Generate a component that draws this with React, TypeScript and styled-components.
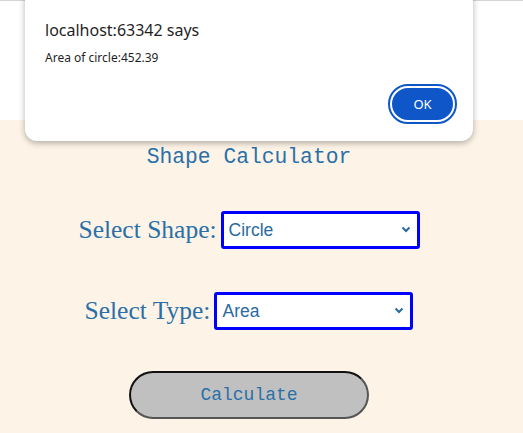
import React from 'react'
import styled, { createGlobalStyle } from 'styled-components'

const GlobalStyle = createGlobalStyle`
  html, body {
    margin: 0;
    padding: 0;
    background: #fff;
  }
`

const Page = styled.div`
  position: relative;
  width: 523px;
  height: 433px;
  overflow: hidden;
`

const TopBand = styled.div`
  height: 119px;
  border-top: 1px solid #d4d4d4;
  background: #fff;
`

const Main = styled.main`
  background: #fdf3e6;
  height: 313px;
  padding: 25px 25px 0 0;
  box-sizing: border-box;
  display: flex;
  flex-direction: column;
  align-items: center;
`

const Title = styled.h1`
  margin: 0;
  font-family: 'Liberation Mono', monospace;
  font-weight: normal;
  font-size: 21.3px;
  line-height: 25px;
  color: #2a70a8;
`

const Row = styled.div<{ $top: number }>`
  display: flex;
  align-items: center;
  gap: 4px;
  margin-top: ${p => p.$top}px;
`

const Label = styled.label`
  font-family: 'Liberation Serif', serif;
  font-size: 25.5px;
  color: #2a70a8;
`

const SelectBox = styled.div`
  position: relative;
  width: 199px;
  height: 38px;
`

const Select = styled.select`
  appearance: none;
  width: 100%;
  height: 100%;
  box-sizing: border-box;
  border: 3px solid #0000ff;
  border-radius: 3px;
  background: #fff;
  padding: 0 0 0 5px;
  font-family: 'Liberation Sans', Arial, sans-serif;
  font-size: 17.5px;
  color: #2a6aa0;
  outline: none;
`

const Chevron = styled.svg`
  position: absolute;
  right: 9px;
  top: 15px;
  pointer-events: none;
`

const CalcButton = styled.button`
  margin-top: 41px;
  width: 240px;
  height: 48px;
  border-radius: 24px;
  border: 2px solid;
  border-color: #111 #555 #555 #111;
  background: #c0c0c0;
  font-family: 'Liberation Mono', monospace;
  font-size: 18px;
  color: #2a70a8;
`

const Dialog = styled.div`
  position: absolute;
  left: 25px;
  top: -12px;
  width: 448px;
  height: 153px;
  background: #fff;
  border-radius: 12px;
  box-shadow: 0 2px 6px rgba(0, 0, 0, 0.3);
  box-sizing: border-box;
  padding: 31px 18px 0 20px;
  font-family: 'Noto Sans', 'Open Sans', sans-serif;
  color: #1f1f1f;
  display: flex;
  flex-direction: column;
`

const DialogTitle = styled.div`
  font-size: 16px;
  line-height: 22px;
`

const DialogMessage = styled.div`
  margin-top: 8px;
  font-size: 12px;
  line-height: 18px;
`

const DialogActions = styled.div`
  display: flex;
  justify-content: flex-end;
  margin-top: 19px;
`

const OkButton = styled.button`
  width: 65px;
  height: 36px;
  border-radius: 18px;
  border: 2px solid #fff;
  outline: 2px solid #0f57c8;
  background: #0f57c8;
  color: #fff;
  font-family: 'Noto Sans', 'Open Sans', sans-serif;
  font-size: 13px;
`

const ChevronIcon = () => (
  <Chevron width="10" height="7" viewBox="0 0 10 7">
    <path d="M1.5 1.5 L5 5 L8.5 1.5" fill="none" stroke="#2a6aa0" strokeWidth="2" />
  </Chevron>
)

export default function App() {
  return (
    <Page>
      <GlobalStyle />
      <TopBand />
      <Main>
        <Title>Shape Calculator</Title>
        <Row $top={41}>
          <Label htmlFor="shape">Select Shape:</Label>
          <SelectBox>
            <Select id="shape" defaultValue="circle">
              <option value="circle">Circle</option>
              <option value="square">Square</option>
              <option value="rectangle">Rectangle</option>
            </Select>
            <ChevronIcon />
          </SelectBox>
        </Row>
        <Row $top={43}>
          <Label htmlFor="type">Select Type:</Label>
          <SelectBox>
            <Select id="type" defaultValue="area">
              <option value="area">Area</option>
              <option value="perimeter">Perimeter</option>
            </Select>
            <ChevronIcon />
          </SelectBox>
        </Row>
        <CalcButton>Calculate</CalcButton>
      </Main>
      <Dialog>
        <DialogTitle>localhost:63342 says</DialogTitle>
        <DialogMessage>Area of circle:452.39</DialogMessage>
        <DialogActions>
          <OkButton>OK</OkButton>
        </DialogActions>
      </Dialog>
    </Page>
  )
}
